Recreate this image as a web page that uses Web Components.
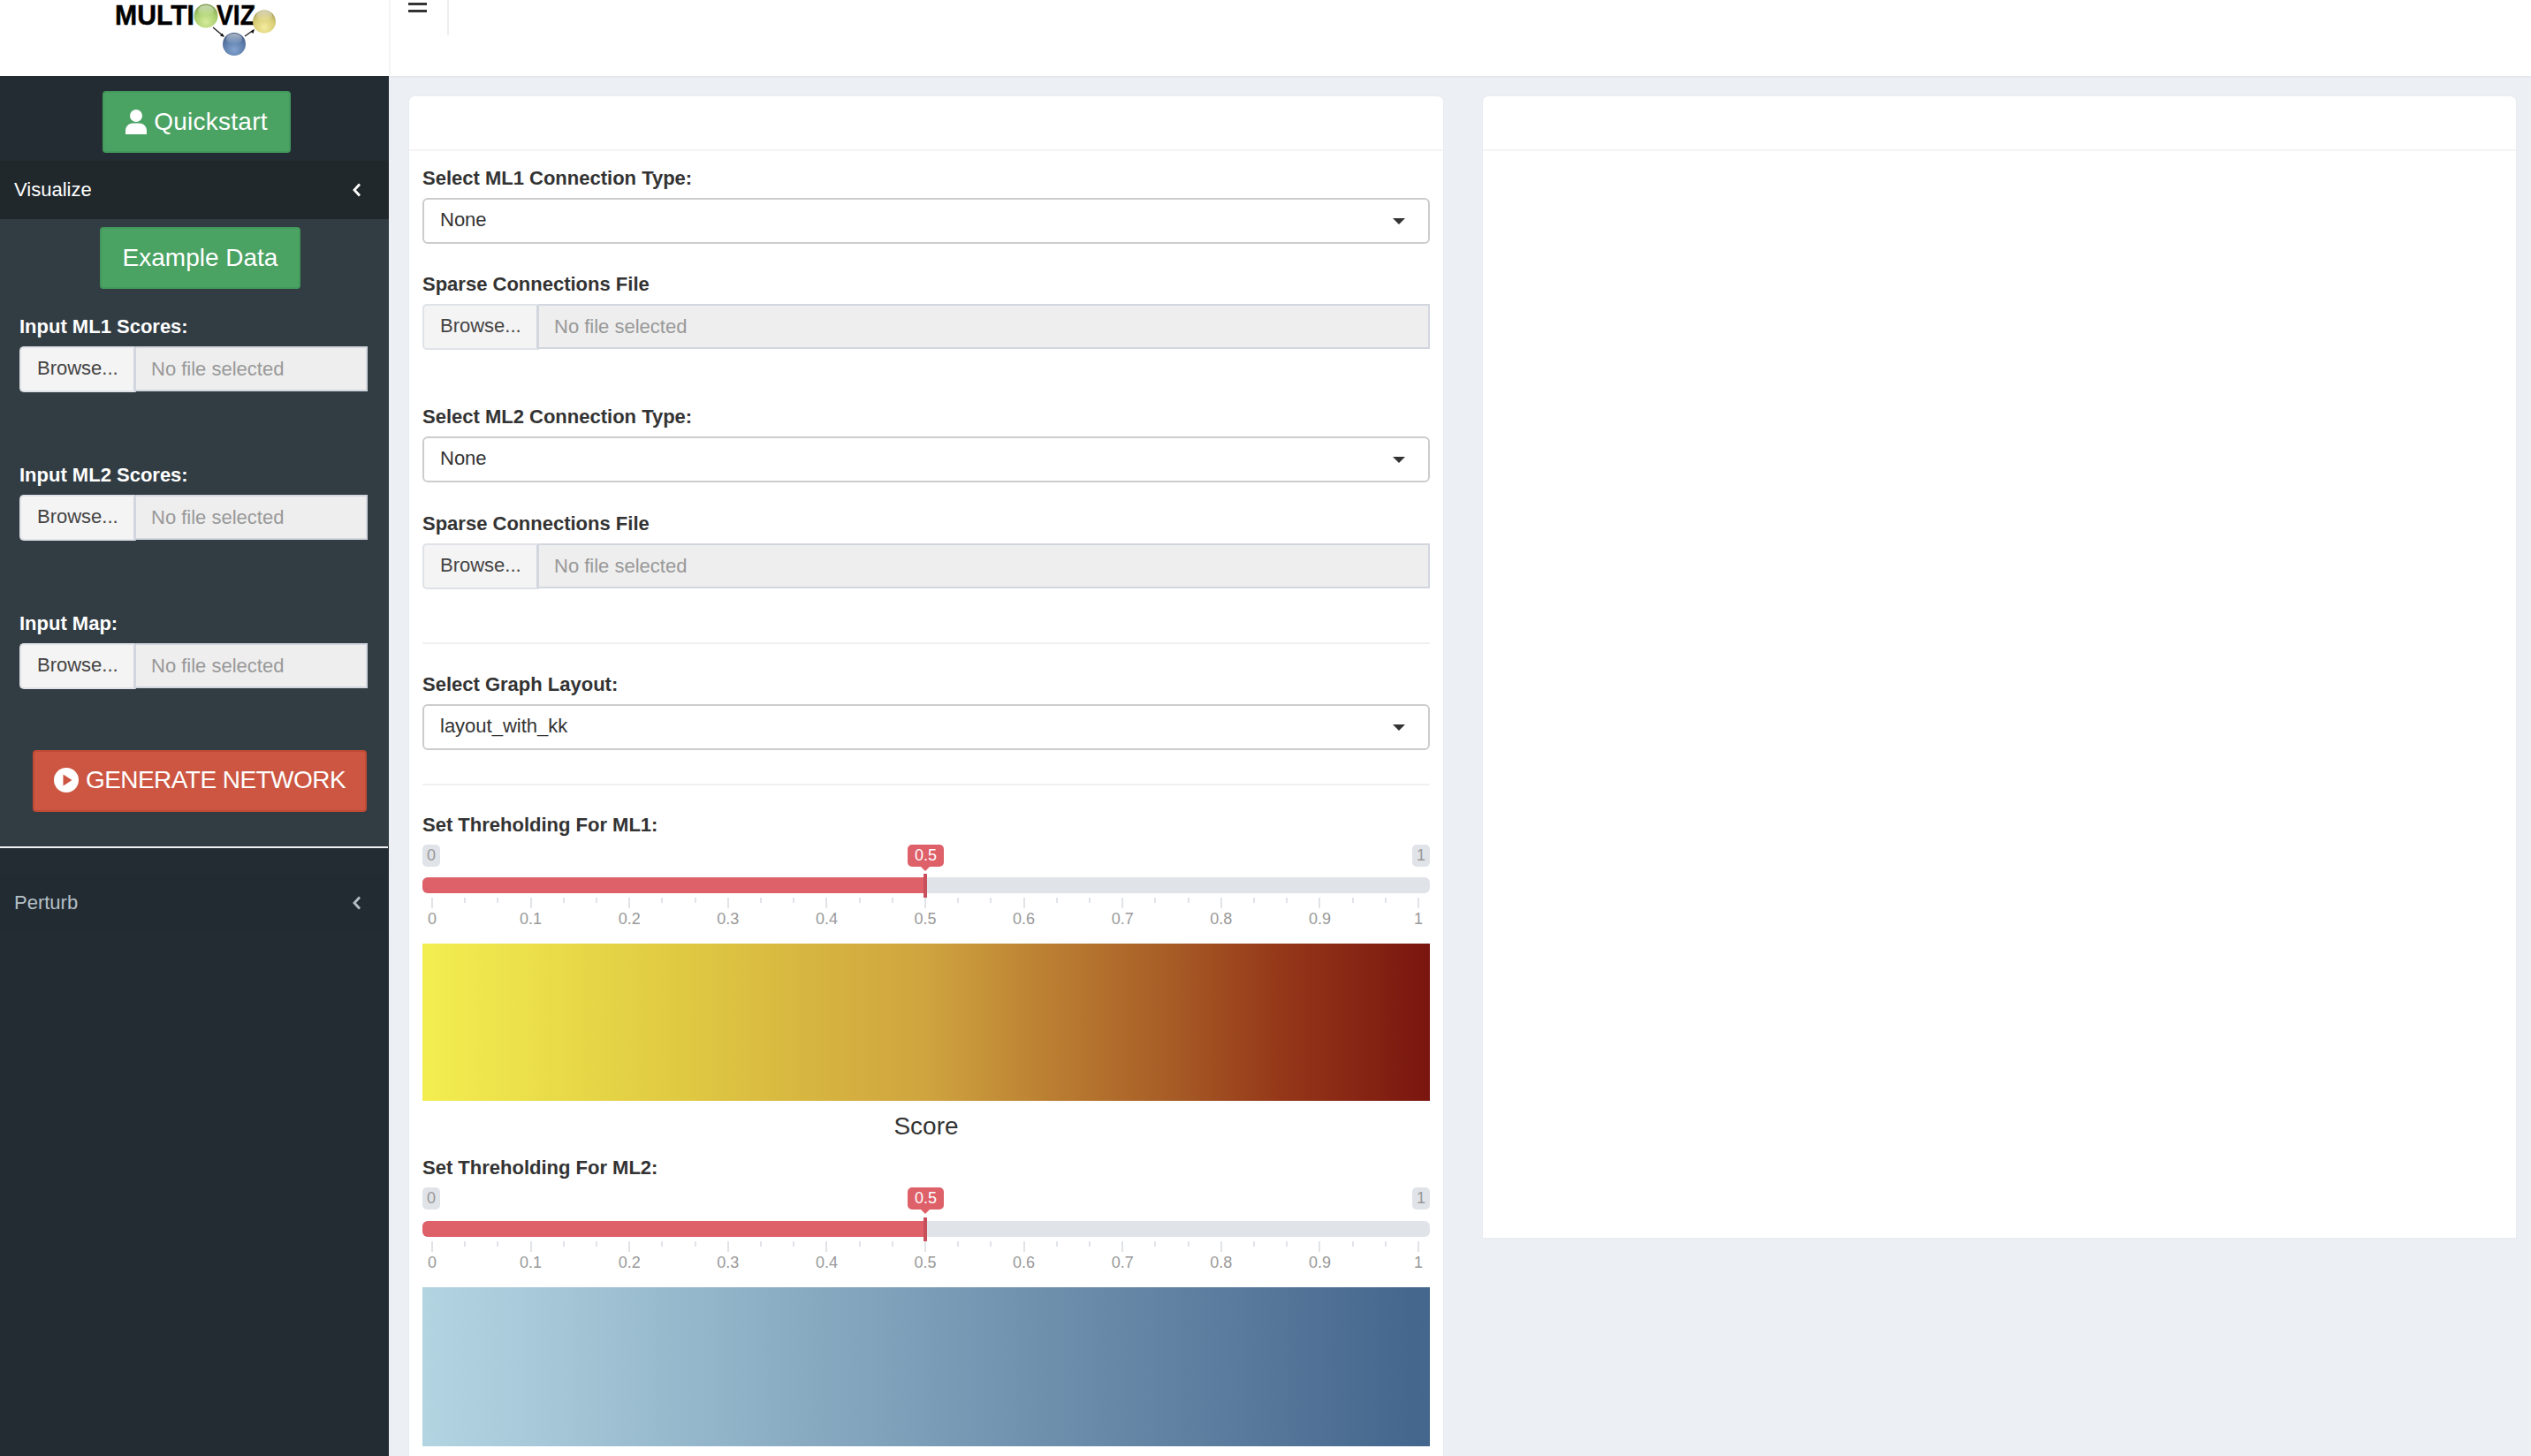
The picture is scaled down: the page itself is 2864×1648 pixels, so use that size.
<!DOCTYPE html>
<html lang="en"><head><meta charset="utf-8"><title>MultiOviz</title>
<style>
html,body{margin:0;padding:0;height:1648px;overflow:hidden;background:#ecf0f5;font-family:"Liberation Sans",Arial,sans-serif;color:#333}
</style></head><body>
<x-app></x-app>
<script>
const BASE=':host{box-sizing:border-box}*{box-sizing:border-box}';
function def(name,html){
  customElements.define(name,class extends HTMLElement{
    constructor(){super();this.attachShadow({mode:'open'}).innerHTML=html;}
  });
}
def('x-logo',`<style>:host{display:block;width:440px;height:86px;background:#fff}svg{display:block}</style>
<svg width="440" height="86" viewBox="0 0 440 86">
<defs>
<radialGradient id="g" cx=".5" cy=".75" r=".75"><stop offset="0" stop-color="#d6eb9c"/><stop offset=".6" stop-color="#a9cf6e"/><stop offset="1" stop-color="#7f9f55"/></radialGradient>
<radialGradient id="y" cx=".5" cy=".75" r=".75"><stop offset="0" stop-color="#f4ec9f"/><stop offset=".6" stop-color="#d9cd76"/><stop offset="1" stop-color="#a39a58"/></radialGradient>
<radialGradient id="b" cx=".5" cy=".75" r=".75"><stop offset="0" stop-color="#84a3cf"/><stop offset=".6" stop-color="#5c7dab"/><stop offset="1" stop-color="#44597c"/></radialGradient>
<linearGradient id="h" x1="0" y1="0" x2="0" y2="1"><stop offset="0" stop-color="#fff" stop-opacity=".55"/><stop offset="1" stop-color="#fff" stop-opacity="0"/></linearGradient>
</defs>
<text x="130" y="28.200" font-family="'Liberation Sans',sans-serif" font-weight="700" font-size="31" fill="#000" stroke="#000" stroke-width=".5" textLength="90" lengthAdjust="spacingAndGlyphs">MULTI</text>
<text x="245" y="28.200" font-family="'Liberation Sans',sans-serif" font-weight="700" font-size="31" fill="#000" stroke="#000" stroke-width=".5" textLength="44" lengthAdjust="spacingAndGlyphs">VIZ</text>
<path d="M241 31 L253 41 M277 41 L287 34" stroke="#222" stroke-width="1.400" fill="none"/>
<path d="M254 42l-5-1.500 2.500-3zM288 33l-1.500 5-3-2.500z" fill="#111"/>
<circle cx="233" cy="18" r="13.500" fill="url(#g)"/><ellipse cx="233" cy="12" rx="9" ry="6" fill="url(#h)"/>
<circle cx="299" cy="24.500" r="13" fill="url(#y)"/><ellipse cx="299" cy="18" rx="9" ry="6" fill="url(#h)"/>
<circle cx="265" cy="50" r="13" fill="url(#b)"/><ellipse cx="265" cy="44" rx="9" ry="6" fill="url(#h)"/>
</svg>`);
def('x-topbar',`<style>${BASE}:host{display:block;height:86px;background:#fff}
.w{display:flex;height:86px}
.l{border-left:2px solid #f4f4f4}
.m{width:66px;height:40px;border-right:2px solid #eee;padding:3px 0 0 20px}
i{display:block;width:21px;height:2.500px;background:#333;margin-bottom:5.500px}
</style><div class="w"><x-logo></x-logo><div class="l"></div><div class="m"><i></i><i></i></div></div>`);
def('x-btn',`<style>${BASE}:host{display:flex;align-items:center;justify-content:center;gap:8px;height:70px;font-size:28px;color:#fff;background:var(--bg);border:2px solid var(--bd);border-radius:4px;white-space:nowrap;letter-spacing:var(--ls,0);padding-bottom:var(--pb,0)}
::slotted(svg){flex:none}</style><slot></slot>`);
def('x-file',`<style>${BASE}:host{display:flex;height:52px;font-size:22px}
.b{width:132px;background:#f4f4f4;color:#444;border:2px solid #dfe2e7;border-right:3px solid #d2d6de;border-radius:5px 0 0 5px;padding-left:18px;line-height:46px;flex:none}
.i{flex:1;background:#eee;color:#999;border:2px solid #d2d6de;padding-left:17px;line-height:47px;margin-bottom:1px;border-left:0}
</style><div class="b">Browse...</div><div class="i">No file selected</div>`);
def('x-select',`<style>${BASE}:host{display:flex;align-items:center;justify-content:space-between;height:52px;font-size:22px;color:#333;background:#fff;border:2px solid #ccc;border-radius:6px;padding:0 26px 2px 18px}
i{display:block;width:0;height:0;border:7px solid transparent;border-top:7px solid #333;border-bottom:0;margin-top:2px}</style><span><slot></slot></span><i></i>`);
def('x-label',`<style>${BASE}:host{display:block;height:30px;line-height:30px;font-size:22px;font-weight:700;color:var(--c,#333);margin-bottom:7px;white-space:nowrap}</style><slot></slot>`);
def('x-side-row',`<style>${BASE}:host{display:flex;align-items:center;justify-content:space-between;height:66px;padding:0 31px 0 16px;font-size:22px;color:var(--c);background:var(--bg)}
svg{display:block}</style><span><slot></slot></span><svg width="10" height="16" viewBox="0 0 10 16"><path d="M8 1.500 2 8l6 6.500" fill="none" stroke="currentColor" stroke-width="2.800"/></svg>`);
def('x-sidebar',`<style>${BASE}:host{display:block;width:440px;height:1562px;background:#232c33;flex:none}
.q{width:213px;margin:17px 0 9px 116px;--bg:#4aa263;--bd:#43995b;--ls:.25px}
.tree{background:#313c43;height:710px;padding:9px 24px 0 22px;--c:#fff}
.ex{width:227px;margin:0 0 28px 91px;--bg:#4aa263;--bd:#43995b}
x-file{margin-bottom:79px}
.gen{width:378px;margin:69px 0 0 15px;--bg:#cc5642;--bd:#c14a35;--ls:-.55px;--pb:2px}
.line{height:2px;width:439px;background:#eef0f2}
.v{--bg:#20282c;--c:#fff}
.p{--bg:#232b32;--c:#b4c0c6;margin-top:29px}
</style>
<x-btn class="q"><svg width="24" height="28" viewBox="0 0 24 28"><circle cx="12" cy="7" r="7" fill="#fff"/><path d="M0 28v-4c0-5 4-8.500 8-8.500h8c4 0 8 3.500 8 8.500v4z" fill="#fff"/></svg><span>Quickstart</span></x-btn>
<x-side-row class="v">Visualize</x-side-row>
<div class="tree">
<x-btn class="ex">Example Data</x-btn>
<x-label>Input ML1 Scores:</x-label><x-file></x-file>
<x-label>Input ML2 Scores:</x-label><x-file></x-file>
<x-label>Input Map:</x-label><x-file style="margin-bottom:0"></x-file>
<x-btn class="gen"><svg width="28" height="28" viewBox="0 0 28 28"><circle cx="14" cy="14" r="14" fill="#fff"/><path d="M10.500 7.500v13l10-6.500z" fill="#cc5642"/></svg><span>GENERATE NETWORK</span></x-btn>
</div>
<div class="line"></div>
<x-side-row class="p">Perturb</x-side-row>`);
def('x-box',`<style>${BASE}:host{display:block;background:#fff;border-radius:6px 6px 0 0;box-shadow:0 0 2px rgba(0,0,0,.07);overflow:hidden}
.h{height:62px;border-bottom:2px solid #f4f4f4}
.c{padding:16px 15px 0}</style><div class="h"></div><div class="c"><slot></slot></div>`);
function ticks(){let s='';for(let i=0;i<=30;i++){const maj=i%3===0;s+=`<i class="${maj?'M':''}" style="left:${(i*37.2+10).toFixed(1)}px"></i>`;}
 let l='';for(let i=0;i<=10;i++){const t=i===0?'0':i===10?'1':'0.'+i;l+=`<b style="left:${(i*111.6+10).toFixed(1)}px">${t}</b>`;}return s+l;}
def('x-slider',`<style>${BASE}:host{display:block;position:relative;height:calc(112px + var(--d,0px));font-size:18px}
span{position:absolute;top:0;height:25px;line-height:25px;border-radius:5px;text-align:center}
.n{background:#e0e3e8;color:#999;width:20px}
.v{left:549px;width:41px;background:#de6069;color:#fff}
.a{position:absolute;left:564px;top:25px;border:5.500px solid transparent;border-top:5.500px solid #de6069;border-bottom:0}
.t{position:absolute;left:0;right:0;top:calc(37px + var(--d,0px));height:18px;border-radius:6px;background:#e0e3e8;overflow:hidden}
.f{position:absolute;left:0;top:calc(37px + var(--d,0px));width:569px;height:18px;border-radius:6px 0 0 6px;background:#de6069}
.k{position:absolute;left:567px;top:calc(33px + var(--d,0px));width:4px;height:27px;background:#c9505a}
.g{position:absolute;left:0;right:0;top:calc(60px + var(--d,0px));height:40px}
i{position:absolute;top:0;width:2px;height:6px;background:#e0e3e8}
i.M{height:12px}
b{position:absolute;top:13px;font-weight:400;color:#999;transform:translateX(-50%);line-height:22px;margin-left:1px}
</style><span class="n" style="left:0">0</span><span class="v">0.5</span><div class="a"></div><span class="n" style="right:0">1</span>
<div class="t"></div><div class="f"></div><div class="k"></div><div class="g">${ticks()}</div>`);
def('x-scale',`<style>${BASE}:host{display:block;height:var(--h,178px);background:var(--grad)}</style>`);
def('x-app',`<style>${BASE}:host{display:block;width:2864px;height:1648px;overflow:hidden}
.r{display:flex}
main{flex:1;display:grid;grid-template-columns:1170px 1169px;gap:45px;padding:21px 17px 0 23px;height:1562px;align-items:start;border-top:2px solid #e4e7eb}
hr{border:0;height:2px;background:#f0f0f0;margin:0}
.right{height:1292px}
.left{height:1560px}
.s{text-align:center;font-size:28px;height:58px;line-height:58px;color:#333}
</style>
<x-topbar></x-topbar>
<div class="r"><x-sidebar></x-sidebar>
<main>
<x-box class="left">
<x-label>Select ML1 Connection Type:</x-label><x-select>None</x-select>
<x-label style="margin-top:31px">Sparse Connections File</x-label><x-file></x-file>
<x-label style="margin-top:61px">Select ML2 Connection Type:</x-label><x-select>None</x-select>
<x-label style="margin-top:32px">Sparse Connections File</x-label><x-file></x-file>
<hr style="margin:60px 0 31px">
<x-label>Select Graph Layout:</x-label><x-select>layout_with_kk</x-select>
<hr style="margin:38px 0 30px">
<x-label>Set Threholding For ML1:</x-label><x-slider></x-slider>
<x-scale style="--grad:linear-gradient(90deg,#f3ee50 0%,#e0ca42 25%,#cfa43f 50%,#bb7f32 62%,#a65a25 75%,#953819 85%,#7a150f 100%)"></x-scale>
<div class="s">Score</div>
<x-label style="margin-top:3px">Set Threholding For ML2:</x-label><x-slider style="--d:1px"></x-slider>
<x-scale style="--h:180px;--grad:linear-gradient(90deg,#b3d5e2,#44658c)"></x-scale>
</x-box>
<x-box class="right"></x-box>
</main></div>`);
</script>
</body></html>
